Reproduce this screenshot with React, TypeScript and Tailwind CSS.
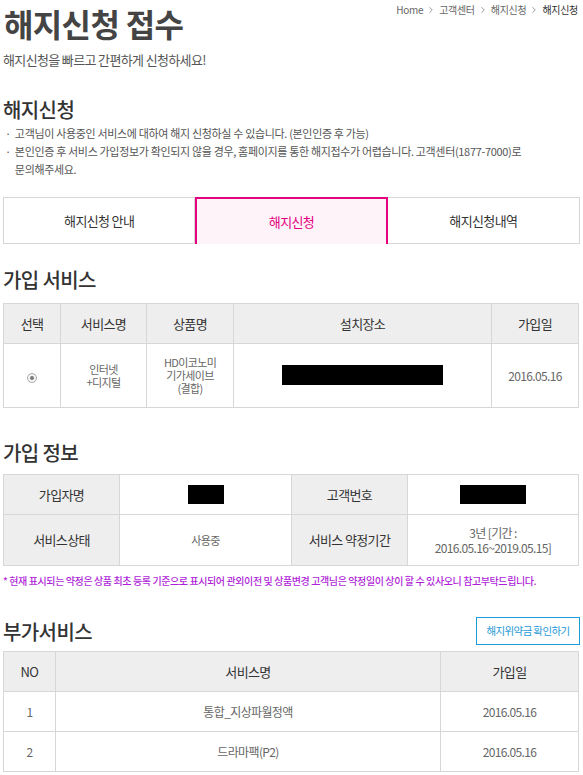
import { ChevronRight } from "lucide-react";

const font = { fontFamily: '"Noto Sans CJK KR", "Noto Sans", sans-serif' };

const Crumb = ({ label, last }: { label: string; last?: boolean }) => (
    <span className={last ? "text-[#333]" : "text-[#666]"}>{label}</span>
);

const Breadcrumb = () => (
    <div className="flex items-center gap-[3px] text-[10px] leading-[14px] tracking-[-0.03em]">
        <Crumb label="Home" />
        <ChevronRight size={10} className="text-[#888]" />
        <Crumb label="고객센터" />
        <ChevronRight size={10} className="text-[#888]" />
        <Crumb label="해지신청" />
        <ChevronRight size={10} className="text-[#888]" />
        <Crumb label="해지신청" last />
    </div>
);

const SectionTitle = ({ children }: { children: React.ReactNode }) => (
    <h2 className="text-[20px] leading-[28px] font-medium text-[#333] tracking-[-0.03em]">{children}</h2>
);

const Redacted = ({ w }: { w: string }) => <span className={`inline-block h-[19px] bg-black ${w}`} />;

const th = "bg-[#eeeeee] border border-[#d7d7d7] text-[13px] font-normal text-[#333] h-[40px] text-center";
const td = "border border-[#d7d7d7] text-[11px] text-[#666] text-center leading-[13px]";

const App = () => {
    return (
        <div style={font} className="w-[583px] bg-white px-[3px] pb-[4px] tracking-[-0.04em]">
            <div className="flex justify-between items-start pr-[2px]">
                <h1 className="text-[32px] leading-[46px] font-bold text-[#444] pl-[1px]">해지신청 접수</h1>
                <div className="pt-[3px]">
                    <Breadcrumb />
                </div>
            </div>
            <p className="text-[13px] leading-[20px] text-[#555] mt-[4px]">해지신청을 빠르고 간편하게 신청하세요!</p>

            <div className="mt-[26px]">
                <SectionTitle>해지신청</SectionTitle>
            </div>
            <ul className="text-[11px] leading-[18px] text-[#555] tracking-[-0.03em]">
                <li className="flex gap-[4px] pl-[2px] h-[18px]">
                    <span className="leading-[18px]">·</span>
                    <span className="leading-[18px]">고객님이 사용중인 서비스에 대하여 해지 신청하실 수 있습니다. (본인인증 후 가능)</span>
                </li>
                <li className="flex gap-[4px] pl-[2px]">
                    <span className="leading-[18px]">·</span>
                    <span className="leading-[18px]">
                        본인인증 후 서비스 가입정보가 확인되지 않을 경우, 홈페이지를 통한 해지접수가 어렵습니다. 고객센터(1877-7000)로
                        <br />
                        문의해주세요.
                    </span>
                </li>
            </ul>

            <div className="mt-[19px] grid grid-cols-3 h-[47px] border-b border-[#d7d7d7] text-[13px]">
                <div className="flex items-center justify-center border border-b-0 border-[#d7d7d7] text-[#333]">해지신청 안내</div>
                <div className="flex items-center justify-center border-2 border-b-0 border-[#e4007f] bg-[#fdf3f9] text-[#e4007f] -mb-px">해지신청</div>
                <div className="flex items-center justify-center border border-b-0 border-l-0 border-[#d7d7d7] text-[#333]">해지신청내역</div>
            </div>

            <div className="mt-[22px]">
                <SectionTitle>가입 서비스</SectionTitle>
            </div>
            <table className="mt-[9px] w-[575px] border-collapse table-fixed">
                <colgroup>
                    <col className="w-[57px]" />
                    <col className="w-[86px]" />
                    <col className="w-[87px]" />
                    <col className="w-[258px]" />
                    <col className="w-[87px]" />
                </colgroup>
                <thead>
                    <tr>
                        <th className={th}>선택</th>
                        <th className={th}>서비스명</th>
                        <th className={th}>상품명</th>
                        <th className={th}>설치장소</th>
                        <th className={th}>가입일</th>
                    </tr>
                </thead>
                <tbody>
                    <tr className="h-[64px]">
                        <td className={td}>
                            <span className="inline-flex items-center justify-center w-[10px] h-[10px] rounded-full border border-[#aaa] bg-[#f4f4f4]">
                                <span className="w-[4px] h-[4px] rounded-full bg-[#777]" />
                            </span>
                        </td>
                        <td className={td}>인터넷<br />+디지털</td>
                        <td className={td}>HD이코노미<br />기가세이브<br />(결합)</td>
                        <td className={td}><Redacted w="w-[161px] h-[20px]" /></td>
                        <td className={`${td} text-[12px]`}>2016.05.16</td>
                    </tr>
                </tbody>
            </table>

            <div className="mt-[31px]">
                <SectionTitle>가입 정보</SectionTitle>
            </div>
            <table className="mt-[7px] w-[575px] border-collapse table-fixed">
                <colgroup>
                    <col className="w-[116px]" />
                    <col className="w-[172px]" />
                    <col className="w-[116px]" />
                    <col className="w-[171px]" />
                </colgroup>
                <tbody>
                    <tr className="h-[40px]">
                        <th className={th}>가입자명</th>
                        <td className={td}><Redacted w="w-[36px] align-middle" /></td>
                        <th className={th}>고객번호</th>
                        <td className={td}><Redacted w="w-[66px] align-middle" /></td>
                    </tr>
                    <tr className="h-[51px]">
                        <th className={th}>서비스상태</th>
                        <td className={td}>사용중</td>
                        <th className={th}>서비스 약정기간</th>
                        <td className={`${td} text-[12px] leading-[15px]`}>3년 [기간 :<br />2016.05.16~2019.05.15]</td>
                    </tr>
                </tbody>
            </table>
            <p className="mt-[8px] text-[10px] leading-[14px] font-medium text-[#b01fd8] tracking-[-0.04em]">
                * 현재 표시되는 약정은 상품 최초 등록 기준으로 표시되어 관외이전 및 상품변경 고객님은 약정일이 상이 할 수 있사오니 참고부탁드립니다.
            </p>

            <div className="mt-[29px] flex items-end justify-between">
                <div className="mb-[5px]">
                    <SectionTitle>부가서비스</SectionTitle>
                </div>
                <button className="w-[104px] h-[28px] border border-[#1e9ad6] text-[10.5px] text-[#1e9ad6] mb-[6px]">해지위약금 확인하기</button>
            </div>
            <table className="w-[575px] border-collapse table-fixed">
                <colgroup>
                    <col className="w-[52px]" />
                    <col className="w-[385px]" />
                    <col className="w-[138px]" />
                </colgroup>
                <thead>
                    <tr>
                        <th className={th}>NO</th>
                        <th className={th}>서비스명</th>
                        <th className={th}>가입일</th>
                    </tr>
                </thead>
                <tbody>
                    <tr className="h-[40px]">
                        <td className={`${td} text-[12px]`}>1</td>
                        <td className={`${td} text-[12px]`}>통합_지상파월정액</td>
                        <td className={`${td} text-[12px]`}>2016.05.16</td>
                    </tr>
                    <tr className="h-[40px]">
                        <td className={`${td} text-[12px]`}>2</td>
                        <td className={`${td} text-[12px]`}>드라마팩(P2)</td>
                        <td className={`${td} text-[12px]`}>2016.05.16</td>
                    </tr>
                </tbody>
            </table>
        </div>
    );
};

export default App;
